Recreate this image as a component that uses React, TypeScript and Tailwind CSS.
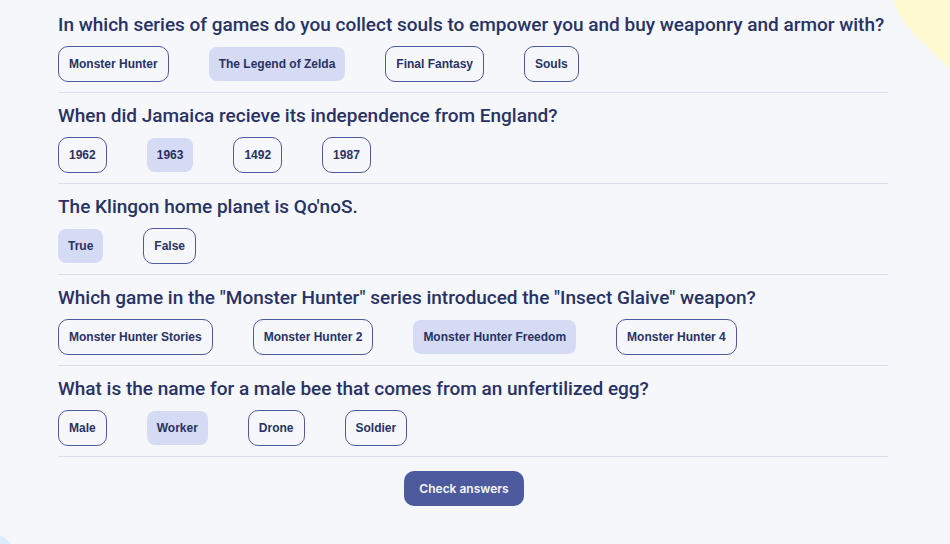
import { useState } from "react";

type Question = { title: string; options: string[]; picked: number };

const questions: Question[] = [
  {
    title:
      "In which series of games do you collect souls to empower you and buy weaponry and armor with?",
    options: ["Monster Hunter", "The Legend of Zelda", "Final Fantasy", "Souls"],
    picked: 1,
  },
  {
    title: "When did Jamaica recieve its independence from England?",
    options: ["1962", "1963", "1492", "1987"],
    picked: 1,
  },
  {
    title: "The Klingon home planet is Qo'noS.",
    options: ["True", "False"],
    picked: 0,
  },
  {
    title: 'Which game in the "Monster Hunter" series introduced the "Insect Glaive" weapon?',
    options: [
      "Monster Hunter Stories",
      "Monster Hunter 2",
      "Monster Hunter Freedom",
      "Monster Hunter 4",
    ],
    picked: 2,
  },
  {
    title: "What is the name for a male bee that comes from an unfertilized egg?",
    options: ["Male", "Worker", "Drone", "Soldier"],
    picked: 1,
  },
];

function QuestionBlock({ title, options, picked }: Question) {
  const [selected, setSelected] = useState(picked);
  return (
    <section className="border-b border-[#dbdef0] pt-[11px] pb-[10px]">
      <h2 className="font-['Roboto',sans-serif] text-[19px] leading-[23px] font-medium">{title}</h2>
      <div className="mt-[10px] flex flex-wrap items-center gap-x-10 gap-y-2">
        {options.map((option, i) => (
          <button
            key={option}
            type="button"
            aria-pressed={i === selected}
            onClick={() => setSelected(i)}
            className={
              i === selected
                ? "rounded-lg bg-[#d6dbf5] p-[10px] text-xs leading-[14px] font-bold"
                : "rounded-[10px] border border-[#4d5b9e] p-[10px] text-xs leading-[14px] font-bold"
            }
          >
            {option}
          </button>
        ))}
      </div>
    </section>
  );
}

export default function App() {
  return (
    <div className="relative min-h-screen overflow-hidden bg-[#f5f7fb] font-['Liberation_Sans',Arial,sans-serif] text-[#293264]">
      <svg
        className="absolute top-0 right-0 h-[72px] w-[62px]"
        viewBox="0 0 62 72"
        aria-hidden="true"
      >
        <path d="M5 0C9 14 18 25 28 36C40 48 52 59 62 70V0Z" fill="#fffad1" />
      </svg>
      <svg
        className="absolute bottom-0 left-0 h-[9px] w-[11px]"
        viewBox="0 0 11 9"
        aria-hidden="true"
      >
        <path d="M0 0Q6 3 11 9H0Z" fill="#deebf8" />
      </svg>
      <main className="relative pt-[2px] pr-[62px] pb-9 pl-[58px]">
        {questions.map((q) => (
          <QuestionBlock key={q.title} {...q} />
        ))}
        <div className="mt-[14px] flex justify-center pr-[18px]">
          <button
            type="button"
            className="rounded-[10px] bg-[#4d5b9e] px-[15px] py-2 font-['Inter',sans-serif] text-xs leading-[19px] font-semibold text-[#f5f7fb]"
          >
            Check answers
          </button>
        </div>
      </main>
    </div>
  );
}
